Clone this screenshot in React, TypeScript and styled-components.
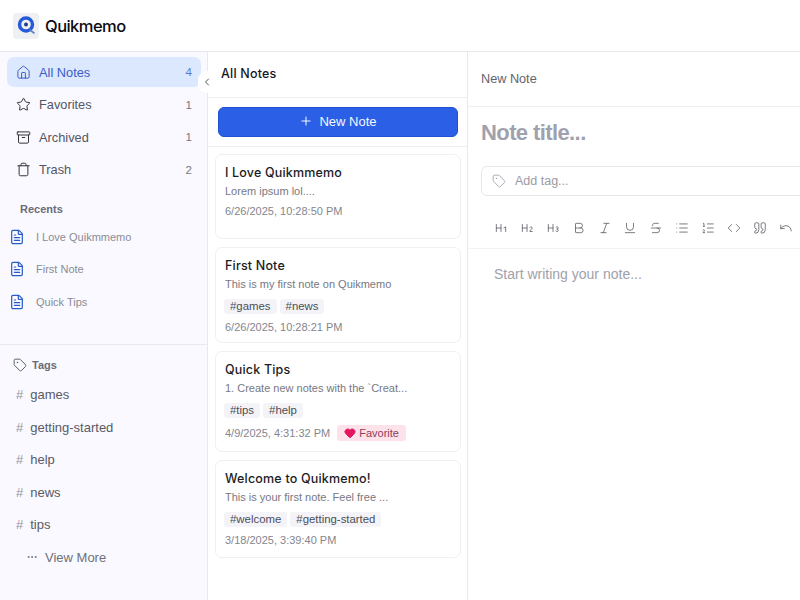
import styled, { createGlobalStyle } from "styled-components";
import {
  Archive,
  Bold,
  ChevronLeft,
  Code,
  FileText,
  Heading1,
  Heading2,
  Heading3,
  Heart,
  Home,
  Italic,
  List,
  ListOrdered,
  Plus,
  Star,
  Strikethrough,
  Tag,
  Trash,
  Underline,
  Undo,
  Ellipsis,
  Quote,
} from "lucide-react";

const GlobalStyle = createGlobalStyle`
  html, body {
    margin: 0;
    padding: 0;
    background: #fff;
    font-family: "Liberation Sans", Arial, sans-serif;
  }
  * { box-sizing: border-box; }
`;

const navItems = [
  { label: "All Notes", count: 4, icon: Home, active: true },
  { label: "Favorites", count: 1, icon: Star },
  { label: "Archived", count: 1, icon: Archive },
  { label: "Trash", count: 2, icon: Trash },
];
const recents = ["I Love Quikmmemo", "First Note", "Quick Tips"];
const tags = ["games", "getting-started", "help", "news", "tips"];
const toolbar = [
  Heading1,
  Heading2,
  Heading3,
  Bold,
  Italic,
  Underline,
  Strikethrough,
  List,
  ListOrdered,
  Code,
  Quote,
  Undo,
];
const notes = [
  {
    title: "I Love Quikmmemo",
    body: "Lorem ipsum lol....",
    tags: [],
    date: "6/26/2025, 10:28:50 PM",
    height: 85,
  },
  {
    title: "First Note",
    body: "This is my first note on Quikmemo",
    tags: ["games", "news"],
    date: "6/26/2025, 10:28:21 PM",
    height: 96,
  },
  {
    title: "Quick Tips",
    body: "1. Create new notes with the `Creat...",
    tags: ["tips", "help"],
    date: "4/9/2025, 4:31:32 PM",
    favorite: true,
    height: 101,
  },
  {
    title: "Welcome to Quikmemo!",
    body: "This is your first note. Feel free ...",
    tags: ["welcome", "getting-started"],
    date: "3/18/2025, 3:39:40 PM",
    height: 98,
  },
];

const Logo = () => (
  <svg width="26" height="26" viewBox="0 0 26 26">
    <rect width="26" height="26" rx="4" fill="#eef0f4" />
    <circle cx="13" cy="11.5" r="6.5" fill="none" stroke="#2459d8" strokeWidth="3.4" />
    <circle cx="13" cy="11.5" r="2" fill="#23408f" />
    <path d="M17 17l4 3" stroke="#5f7fc9" strokeWidth="1.6" strokeLinecap="round" />
  </svg>
);

export default function App() {
  return (
    <>
      <GlobalStyle />
      <Page>
        <TopBar>
          <Logo />
          <Brand>Quikmemo</Brand>
        </TopBar>
        <Columns>
          <Sidebar>
            <Nav>
              {navItems.map(({ label, count, icon: Icon, active }) => (
                <NavRow key={label} $active={active}>
                  <Icon size={15} strokeWidth={1.6} />
                  <NavLabel>{label}</NavLabel>
                  <NavCount>{count}</NavCount>
                </NavRow>
              ))}
            </Nav>
            <SectionLabel>Recents</SectionLabel>
            <RecentList>
              {recents.map((r) => (
                <RecentRow key={r}>
                  <FileText size={16} strokeWidth={1.8} color="#2a5bc8" />
                  {r}
                </RecentRow>
              ))}
            </RecentList>
            <TagsSection>
              <TagsHeader>
                <Tag size={14} strokeWidth={1.6} color="#4b5563" />
                Tags
              </TagsHeader>
              {tags.map((t) => (
                <TagRow key={t}>
                  <Hash>#</Hash>
                  {t}
                </TagRow>
              ))}
              <ViewMore>
                <Ellipsis size={12} strokeWidth={2} />
                View More
              </ViewMore>
            </TagsSection>
            <Collapse>
              <ChevronLeft size={12} strokeWidth={2} />
            </Collapse>
          </Sidebar>

          <NoteColumn>
            <ColumnHeader>All Notes</ColumnHeader>
            <ButtonBar>
              <NewNoteButton>
                <Plus size={14} strokeWidth={1.8} />
                New Note
              </NewNoteButton>
            </ButtonBar>
            <CardList>
              {notes.map((n) => (
                <Card key={n.title} $height={n.height}>
                  <CardTitle>{n.title}</CardTitle>
                  <CardBody>{n.body}</CardBody>
                  {n.tags.length > 0 && (
                    <CardTags>
                      {n.tags.map((t) => (
                        <Chip key={t}>#{t}</Chip>
                      ))}
                    </CardTags>
                  )}
                  <CardFooter $favorite={n.favorite}>
                    {n.date}
                    {n.favorite && (
                      <FavoriteBadge>
                        <Heart size={12} fill="#e3175f" color="#e3175f" />
                        Favorite
                      </FavoriteBadge>
                    )}
                  </CardFooter>
                </Card>
              ))}
            </CardList>
          </NoteColumn>

          <Editor>
            <EditorHeader>New Note</EditorHeader>
            <EditorForm>
              <TitlePlaceholder>Note title...</TitlePlaceholder>
              <TagInput>
                <Tag size={14} strokeWidth={1.5} color="#9ca3af" />
                Add tag...
              </TagInput>
            </EditorForm>
            <Toolbar>
              {toolbar.map((Icon, i) => (
                <ToolButton key={i}>
                  <Icon size={14} strokeWidth={1.4} />
                </ToolButton>
              ))}
            </Toolbar>
            <EditorBody>Start writing your note...</EditorBody>
          </Editor>
        </Columns>
      </Page>
    </>
  );
}

const Page = styled.div`
  width: 800px;
  height: 600px;
  display: flex;
  flex-direction: column;
  overflow: hidden;
  background: #fff;
`;

const TopBar = styled.header`
  height: 52px;
  flex: none;
  display: flex;
  align-items: center;
  gap: 6px;
  padding-left: 13px;
  border-bottom: 1px solid #e8e9ee;
`;

const Brand = styled.div`
  font-family: "Inter", sans-serif;
  font-size: 16.5px;
  font-weight: 500;
  letter-spacing: -0.55px;
  color: #0b0b12;
`;

const Columns = styled.div`
  flex: 1;
  display: grid;
  grid-template-columns: 208px 260px 332px;
  min-height: 0;
`;

const Sidebar = styled.aside`
  position: relative;
  background: #f9f9ff;
  border-right: 1px solid #e8e9ee;
  display: flex;
  flex-direction: column;
`;

const Nav = styled.nav`
  display: flex;
  flex-direction: column;
  gap: 2.5px;
  padding: 5px 6px 0 7px;
`;

const NavRow = styled.div<{ $active?: boolean }>`
  height: 30px;
  display: flex;
  align-items: center;
  gap: 8px;
  padding: 0 9px;
  border-radius: 7px;
  font-size: 12.8px;
  color: ${(p) => (p.$active ? "#3b5cc4" : "#55565f")};
  background: ${(p) => (p.$active ? "#dbe8fe" : "transparent")};
  svg {
    color: ${(p) => (p.$active ? "#3b5cc4" : "#33343c")};
  }
`;

const NavLabel = styled.span`
  flex: 1;
`;

const NavCount = styled.span`
  font-size: 11.5px;
  opacity: 0.8;
`;

const SectionLabel = styled.div`
  margin: 17px 0 0 20px;
  font-size: 11px;
  font-weight: 600;
  line-height: 14px;
  color: #6b6c76;
`;

const RecentList = styled.div`
  display: flex;
  flex-direction: column;
  gap: 2.5px;
  padding: 6px 0 0 9px;
`;

const RecentRow = styled.div`
  height: 30px;
  display: flex;
  align-items: center;
  gap: 11px;
  font-size: 11px;
  color: #8b8c95;
`;

const TagsSection = styled.div`
  margin-top: 27px;
  border-top: 1px solid #e8e9ee;
  padding-top: 12px;
  display: flex;
  flex-direction: column;
`;

const TagsHeader = styled.div`
  display: flex;
  align-items: center;
  gap: 5px;
  height: 16px;
  padding-left: 13px;
  margin-bottom: 6px;
  font-size: 11px;
  font-weight: 600;
  color: #6b6c76;
`;

const TagRow = styled.div`
  height: 32.5px;
  display: flex;
  align-items: center;
  gap: 7px;
  padding-left: 16px;
  font-size: 13px;
  color: #5a5b64;
`;

const Hash = styled.span`
  font-size: 13px;
  color: #93949c;
`;

const ViewMore = styled(TagRow)`
  gap: 7px;
  padding-left: 26px;
  color: #6f7079;
`;

const Collapse = styled.button`
  position: absolute;
  top: 19px;
  right: -9px;
  width: 18px;
  height: 22px;
  padding: 0;
  display: flex;
  align-items: center;
  justify-content: center;
  border: none;
  border-radius: 9px;
  background: #fff;
  color: #55565f;
`;

const NoteColumn = styled.section`
  border-right: 1px solid #e8e9ee;
  display: flex;
  flex-direction: column;
  min-width: 0;
`;

const ColumnHeader = styled.div`
  height: 46px;
  flex: none;
  display: flex;
  align-items: center;
  padding: 0 0 2px 13px;
  border-bottom: 1px solid #eeeff3;
  font-family: "Inter", sans-serif;
  font-size: 12.5px;
  font-weight: 500;
  letter-spacing: 0.2px;
  color: #17171f;
`;

const ButtonBar = styled.div`
  height: 49px;
  flex: none;
  padding: 9px 9px 0 10px;
  border-bottom: 1px solid #eeeff3;
`;

const NewNoteButton = styled.button`
  width: 100%;
  height: 30px;
  display: flex;
  align-items: center;
  justify-content: center;
  gap: 6px;
  padding: 0 0 2px;
  border: 1px solid #1f50d0;
  border-radius: 6px;
  background: #2b60e6;
  color: #f4f7ff;
  font-family: "Liberation Sans", Arial, sans-serif;
  font-size: 13px;
`;

const CardList = styled.div`
  display: flex;
  flex-direction: column;
  gap: 8px;
  padding: 7px 6px 0 7px;
`;

const Card = styled.article<{ $height: number }>`
  height: ${(p) => p.$height}px;
  padding: 9px 9px 0;
  border: 1px solid #f0f0f4;
  border-radius: 7px;
  background: #fff;
`;

const CardTitle = styled.div`
  font-family: "Inter", sans-serif;
  font-size: 12.5px;
  font-weight: 500;
  letter-spacing: 0.18px;
  line-height: 17px;
  color: #1c1c24;
`;

const CardBody = styled.div`
  margin-top: 3px;
  font-size: 11px;
  line-height: 14px;
  color: #77787f;
`;

const CardTags = styled.div`
  display: flex;
  gap: 3px;
  margin: 8px 0 0 -1px;
`;

const Chip = styled.span`
  padding: 0 6px;
  height: 15px;
  line-height: 15px;
  border-radius: 3px;
  background: #f4f4f8;
  font-size: 11.4px;
  color: #4c4d56;
`;

const CardFooter = styled.div<{ $favorite?: boolean }>`
  display: flex;
  align-items: center;
  gap: 7px;
  margin-top: ${(p) => (p.$favorite ? 7 : 5)}px;
  min-height: 16px;
  font-size: 11px;
  color: #85868e;
`;

const FavoriteBadge = styled.span`
  display: inline-flex;
  align-items: center;
  gap: 3px;
  height: 16px;
  padding: 0 7px;
  border-radius: 3px;
  background: #fde2ea;
  color: #8f3a58;
`;

const Editor = styled.main`
  display: flex;
  flex-direction: column;
  min-width: 0;
  overflow: hidden;
`;

const EditorHeader = styled.div`
  height: 55px;
  flex: none;
  display: flex;
  align-items: center;
  padding: 0 0 1px 13px;
  border-bottom: 1px solid #eeeff3;
  font-size: 12.7px;
  color: #63646d;
`;

const EditorForm = styled.div`
  padding: 11px 0 0 13px;
`;

const TitlePlaceholder = styled.div`
  font-size: 22px;
  font-weight: 700;
  line-height: 30px;
  letter-spacing: -0.6px;
  color: #a0a1ad;
`;

const TagInput = styled.div`
  width: 420px;
  height: 30px;
  margin-top: 18px;
  display: flex;
  align-items: center;
  gap: 9px;
  padding-left: 10px;
  border: 1px solid #e6e7ec;
  border-radius: 6px;
  font-size: 12.5px;
  color: #9a9ba4;
`;

const Toolbar = styled.div`
  display: flex;
  height: 41px;
  margin-top: 12px;
  padding: 11px 0 0 26px;
  gap: 11.9px;
  border-bottom: 1px solid #f3f3f6;
`;

const ToolButton = styled.span`
  width: 14px;
  height: 18px;
  flex: none;
  display: flex;
  align-items: center;
  justify-content: center;
  color: #5f6068;
`;

const EditorBody = styled.div`
  padding: 16px 0 0 26px;
  font-size: 14px;
  line-height: 18px;
  color: #a0a1a9;
`;
